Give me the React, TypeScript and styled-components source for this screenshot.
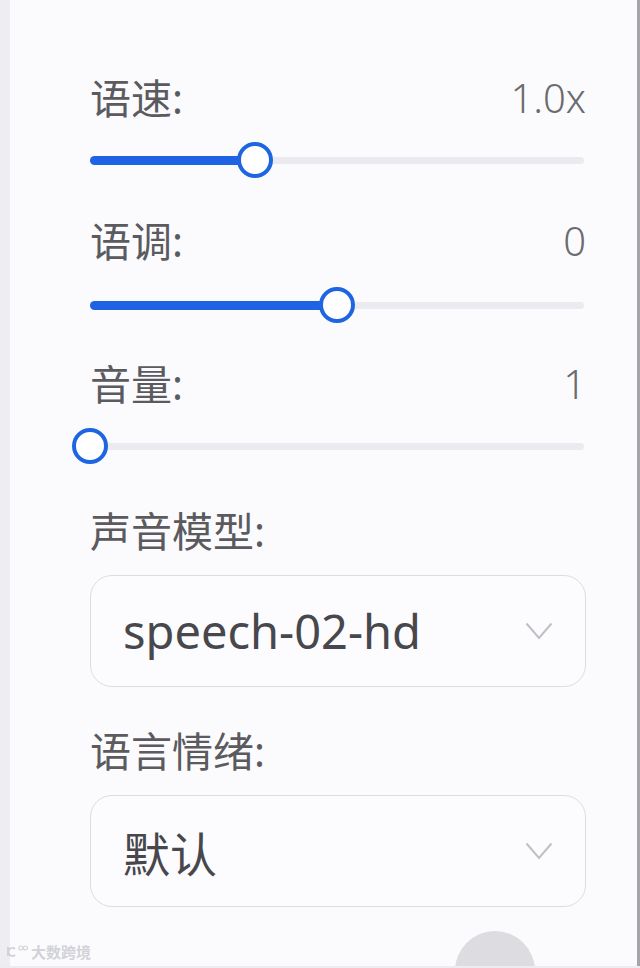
import React from 'react';
import styled, { createGlobalStyle } from 'styled-components';

const GlobalStyle = createGlobalStyle`
  html, body {
    margin: 0;
    padding: 0;
    background: #fbfbfd;
  }
  body {
    font-family: "Noto Sans", "Noto Sans CJK SC", sans-serif;
  }
`;

const Frame = styled.div`
  position: relative;
  display: flex;
  width: 640px;
  height: 968px;
  overflow: hidden;
  background: #fbfbfd;
  border-bottom: 2px solid #ececf1;
  box-sizing: border-box;
`;

const Rail = styled.div<{ side: 'left' | 'right' }>`
  flex: none;
  width: ${({ side }) => (side === 'left' ? '10px' : '3px')};
  background: ${({ side }) => (side === 'left' ? '#ededf2' : '#a4a4ab')};
`;

const Panel = styled.div`
  flex: 1;
  display: flex;
  flex-direction: column;
  padding: 74px 51px 0 80px;
`;

const Field = styled.div<{ after: number }>`
  display: flex;
  flex-direction: column;
  margin-bottom: ${({ after }) => after}px;
`;

const LabelRow = styled.div`
  display: flex;
  align-items: center;
  justify-content: space-between;
  height: 48px;
`;

const Label = styled.span`
  font-size: 41px;
  line-height: 48px;
  color: #5a5a5f;
  font-family: "Noto Sans", "Noto Sans CJK SC", sans-serif;
`;

const Value = styled.span`
  font-size: 40px;
  line-height: 48px;
  color: #6b6b70;
  font-weight: 300;
  font-family: "Noto Sans", "Noto Sans CJK SC", sans-serif;
`;

const SliderBox = styled.div<{ shift: number }>`
  position: relative;
  height: 40px;
  margin-top: ${({ shift }) => 18 + shift}px;
  margin-bottom: ${({ shift }) => -shift}px;
  padding-right: 2px;
  display: flex;
  align-items: center;
`;

const Track = styled.div`
  position: relative;
  flex: 1;
  height: 7px;
  border-radius: 4px;
  background: #eaeaf0;
`;

const Fill = styled.div`
  position: absolute;
  left: 0;
  top: -1px;
  height: 9px;
  border-radius: 5px;
  background: #1e63e4;
`;

const Thumb = styled.div`
  position: absolute;
  top: 50%;
  width: 36px;
  height: 36px;
  box-sizing: border-box;
  border-radius: 50%;
  border: 4px solid #1f65e2;
  background: #ffffff;
  transform: translate(-50%, -50%);
`;

const Select = styled.div`
  display: flex;
  align-items: center;
  justify-content: space-between;
  height: 112px;
  margin-top: 20px;
  box-sizing: border-box;
  padding: 0 32px 0 32px;
  border: 1.5px solid #dcdce3;
  border-radius: 22px;
  background: #fcfcfe;
`;

const SelectText = styled.span`
  font-size: 47px;
  color: #47474c;
  font-family: "Noto Sans", "Noto Sans CJK SC", sans-serif;
`;

const Watermark = styled.div`
  position: absolute;
  left: 6px;
  bottom: 4px;
  display: flex;
  align-items: center;
  gap: 3px;
  font-size: 15px;
  color: #d2d2d8;
  font-family: "Noto Sans CJK SC", sans-serif;
  font-weight: 700;
`;

const FloatButton = styled.div`
  position: absolute;
  left: 455px;
  top: 931px;
  width: 80px;
  height: 80px;
  border-radius: 50%;
  background: #dcdce1;
`;

interface SliderProps {
  label: string;
  value: string;
  ratio: number;
  after: number;
  shift?: number;
}

const SliderField: React.FC<SliderProps> = ({ label, value, ratio, after, shift = 0 }) => (
  <Field after={after}>
    <LabelRow>
      <Label>{label}</Label>
      <Value>{value}</Value>
    </LabelRow>
    <SliderBox shift={shift}>
      <Track>
        <Fill style={{ width: `${ratio * 100}%` }} />
        <Thumb style={{ left: `${ratio * 100}%` }} />
      </Track>
    </SliderBox>
  </Field>
);

const Chevron = () => (
  <svg width="28" height="18" viewBox="0 0 28 18" fill="none">
    <polyline points="1.5,1.5 14,16 26.5,1.5" stroke="#bfbfc5" strokeWidth="2" />
  </svg>
);

interface SelectProps {
  label: string;
  value: string;
  after: number;
}

const SelectField: React.FC<SelectProps> = ({ label, value, after }) => (
  <Field after={after}>
    <LabelRow>
      <Label>{label}</Label>
    </LabelRow>
    <Select>
      <SelectText>{value}</SelectText>
      <Chevron />
    </Select>
  </Field>
);

export default function App() {
  return (
    <Frame>
      <GlobalStyle />
      <Rail side="left" />
      <Panel>
        <SliderField label="语速:" value="1.0x" ratio={1 / 3} after={37} />
        <SliderField label="语调:" value="0" ratio={0.5} after={37} shift={2} />
        <SliderField label="音量:" value="1" ratio={0} after={41} />
        <SelectField label="声音模型:" value="speech-02-hd" after={40} />
        <SelectField label="语言情绪:" value="默认" after={0} />
      </Panel>
      <Rail side="right" />
      <FloatButton />
      <Watermark>
        <svg width="22" height="14" viewBox="0 0 22 14" fill="none">
          <path d="M2 2 v9 M9 4 a4 4 0 1 0 0 6" stroke="#d2d2d8" strokeWidth="2" />
          <circle cx="15" cy="3" r="2" stroke="#d2d2d8" strokeWidth="1.2" />
          <circle cx="19.5" cy="3" r="2" stroke="#d2d2d8" strokeWidth="1.2" />
        </svg>
        大数跨境
      </Watermark>
    </Frame>
  );
}
